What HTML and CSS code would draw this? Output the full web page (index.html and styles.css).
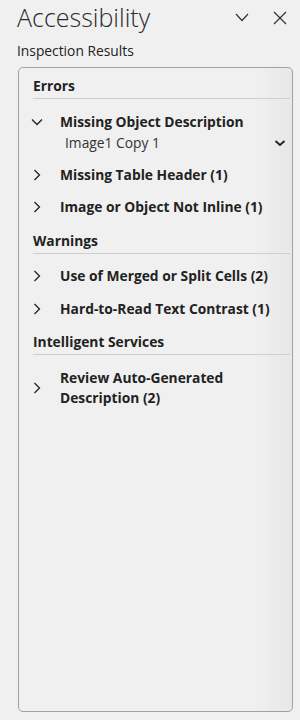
FILE: index.html
```html
<!DOCTYPE html>
<html>
<head>
<meta charset="utf-8">
<link rel="stylesheet" href="styles.css">
</head>
<body>
<div class="pane">
  <div class="head">
    <h1 class="title">Accessibility</h1>
    <div class="head-icons">
      <svg class="hicon" width="14" height="14" viewBox="0 0 14 14"><path d="M1 3 L7 9.5 L13 3" fill="none" stroke="#333" stroke-width="1.2"/></svg>
      <svg class="hicon" width="14" height="14" viewBox="0 0 14 14"><path d="M1 1 L13 13 M13 1 L1 13" fill="none" stroke="#333" stroke-width="1.2"/></svg>
    </div>
  </div>
  <div class="subtitle">Inspection Results</div>
  <div class="box">
    <div class="section">Errors</div>
    <div class="item open">
      <svg class="chev" width="12" height="12" viewBox="0 0 12 12"><path d="M1 3.5 L6 8.5 L11 3.5" fill="none" stroke="#222" stroke-width="1.3"/></svg>
      <div class="label">Missing Object Description</div>
    </div>
    <div class="subitem">
      <span>Image1 Copy 1</span>
      <svg class="dd" width="12" height="8" viewBox="0 0 12 8"><path d="M1.5 2 L6 6 L10.5 2" fill="none" stroke="#222" stroke-width="1.8"/></svg>
    </div>
    <div class="item">
      <svg class="chev" width="12" height="12" viewBox="0 0 12 12"><path d="M3.5 1 L8.5 6 L3.5 11" fill="none" stroke="#222" stroke-width="1.3"/></svg>
      <div class="label">Missing Table Header (1)</div>
    </div>
    <div class="item">
      <svg class="chev" width="12" height="12" viewBox="0 0 12 12"><path d="M3.5 1 L8.5 6 L3.5 11" fill="none" stroke="#222" stroke-width="1.3"/></svg>
      <div class="label">Image or Object Not Inline (1)</div>
    </div>
    <div class="section">Warnings</div>
    <div class="item">
      <svg class="chev" width="12" height="12" viewBox="0 0 12 12"><path d="M3.5 1 L8.5 6 L3.5 11" fill="none" stroke="#222" stroke-width="1.3"/></svg>
      <div class="label">Use of Merged or Split Cells (2)</div>
    </div>
    <div class="item">
      <svg class="chev" width="12" height="12" viewBox="0 0 12 12"><path d="M3.5 1 L8.5 6 L3.5 11" fill="none" stroke="#222" stroke-width="1.3"/></svg>
      <div class="label">Hard-to-Read Text Contrast (1)</div>
    </div>
    <div class="section">Intelligent Services</div>
    <div class="item multi">
      <svg class="chev" width="12" height="12" viewBox="0 0 12 12"><path d="M3.5 1 L8.5 6 L3.5 11" fill="none" stroke="#222" stroke-width="1.3"/></svg>
      <div class="label">Review Auto-Generated<br>Description (2)</div>
    </div>
  </div>
</div>
</body>
</html>
```
FILE: styles.css
```css
html, body {
  margin: 0;
  padding: 0;
  background: #f0f0f0;
}
body {
  width: 300px;
  height: 720px;
  overflow: hidden;
  font-family: "Open Sans", "Liberation Sans", sans-serif;
  color: #1e1e1e;
}
.pane {
  padding: 0 7px 8px 17px;
  display: flex;
  flex-direction: column;
  height: 720px;
  box-sizing: border-box;
}
.head {
  display: flex;
  align-items: flex-start;
  justify-content: space-between;
  height: 34px;
}
.title {
  margin: 0;
  font-weight: 300;
  font-size: 25px;
  color: #2a2a2a;
  line-height: 34px;
}
.head-icons {
  display: flex;
  gap: 24px;
  padding-right: 6px;
  margin-top: 11px;
}
.hicon { display: block; }
.subtitle {
  font-size: 13.8px;
  margin-top: 8px;
  line-height: 18px;
  color: #222;
}
.box {
  margin-top: 7px;
  margin-left: 1px;
  flex: 1;
  border: 1.5px solid #a0a0a0;
  border-radius: 5px;
  padding: 7px 2px 0 14px;
  background: linear-gradient(to right, rgba(0,0,0,0) 86%, rgba(0,0,0,0.035) 100%);
}
.section {
  font-weight: 700;
  font-size: 13.8px;
  line-height: 22px;
  padding-bottom: 1px;
  border-bottom: 1px solid #cfcfcf;
  margin-bottom: 12.5px;
  color: #222;
}
.item {
  display: flex;
  align-items: center;
  min-height: 20px;
  margin-bottom: 12.5px;
}
.item.open { margin-bottom: 0; }
.chev {
  width: 12px;
  margin-left: -2px;
  margin-right: 17px;
  flex: none;
}
.label {
  font-weight: 700;
  font-size: 13.8px;
  line-height: 20px;
  color: #222;
}
.subitem {
  display: flex;
  align-items: center;
  justify-content: space-between;
  margin-top: 1px;
  padding-left: 32px;
  padding-right: 4px;
  font-size: 13.8px;
  line-height: 20px;
  margin-bottom: 12px;
  color: #333;
}
```
